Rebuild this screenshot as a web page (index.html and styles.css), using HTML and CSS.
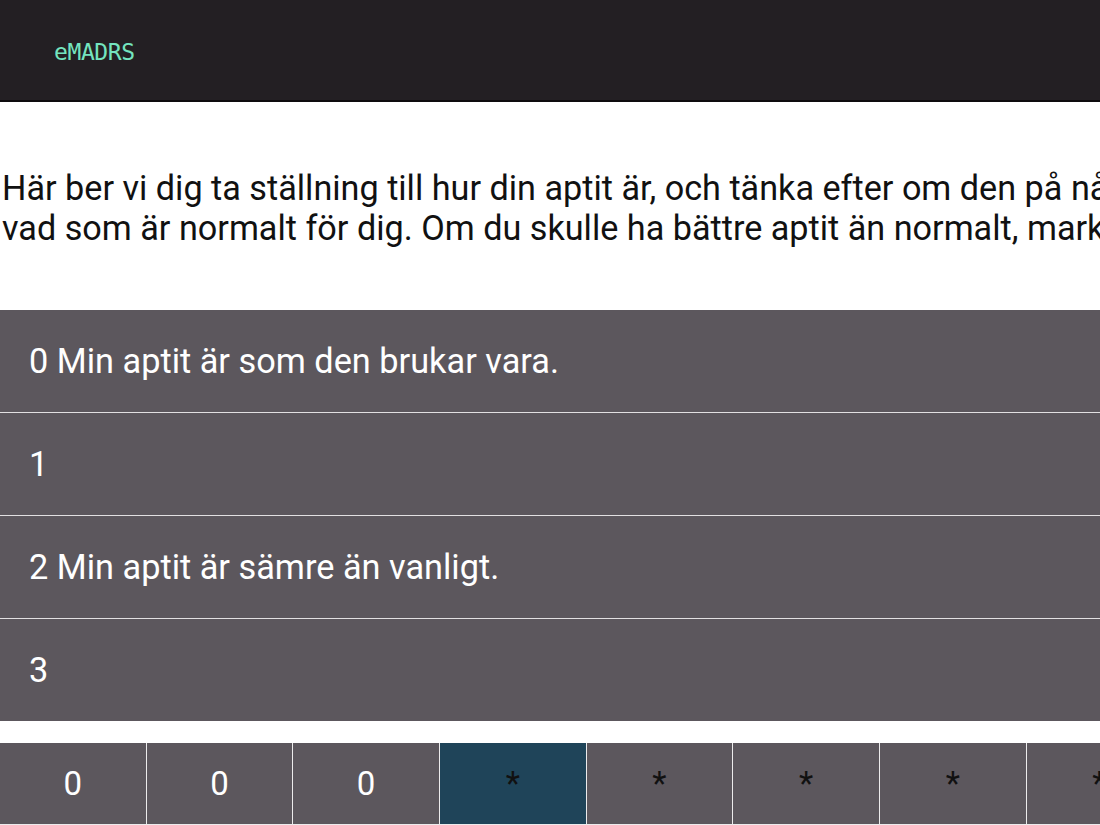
FILE: index.html
```html
<!DOCTYPE html>
<html lang="sv">
<head>
<meta charset="utf-8">
<title>eMADRS</title>
<link rel="stylesheet" href="styles.css">
</head>
<body>
<header class="topbar">
  <div class="logo">eMADRS</div>
</header>
<main class="content">
  <p class="intro">Här ber vi dig ta ställning till hur din aptit är, och tänka efter om den på något sätt skiljer sig från<br>vad som är normalt för dig. Om du skulle ha bättre aptit än normalt, markera 0.</p>
  <ul class="options">
    <li class="option">0 Min aptit är som den brukar vara.</li>
    <li class="option">1</li>
    <li class="option">2 Min aptit är sämre än vanligt.</li>
    <li class="option">3</li>
  </ul>
  <nav class="steps">
    <div class="step done">0</div>
    <div class="step done">0</div>
    <div class="step done">0</div>
    <div class="step current">*</div>
    <div class="step">*</div>
    <div class="step">*</div>
    <div class="step">*</div>
    <div class="step">*</div>
    <div class="step">*</div>
  </nav>
</main>
</body>
</html>
```

FILE: styles.css
```css
html, body {
  margin: 0;
  padding: 0;
  overflow: hidden;
  background: #ffffff;
  font-family: Roboto, "Noto Sans", "Liberation Sans", sans-serif;
}

.topbar {
  box-sizing: border-box;
  height: 102px;
  background: #231f23;
  border-bottom: 2px solid #0e0c0e;
  display: flex;
  align-items: center;
  padding: 4px 0 0 54px;
}

.logo {
  font-family: "DejaVu Sans Mono", monospace;
  font-size: 23px;
  color: #74e4bf;
  letter-spacing: -0.4px;
}

.content {
  padding-top: 66px;
}

.intro {
  margin: 0;
  padding-left: 2px;
  font-size: 34.2px;
  line-height: 40px;
  color: #111111;
  white-space: nowrap;
}

.options {
  list-style: none;
  margin: 62px 0 0;
  padding: 0;
}

.option {
  box-sizing: border-box;
  height: 103px;
  display: flex;
  align-items: center;
  padding-left: 29px;
  background: #5c575d;
  color: #ffffff;
  font-size: 34.3px;
  border-bottom: 1px solid #e2e0e2;
  white-space: nowrap;
}

.option:last-child {
  border-bottom: none;
  height: 102px;
}

.steps {
  display: flex;
  margin-top: 22px;
  width: 1320px;
}

.step {
  box-sizing: border-box;
  flex: 0 0 146.67px;
  height: 82px;
  display: flex;
  align-items: center;
  justify-content: center;
  background: #5c575d;
  border-right: 1px solid #ecebec;
  border-bottom: 1px solid #ecebec;
  color: #111111;
  font-size: 33px;
}

.step.done {
  color: #ffffff;
}

.step.current {
  background: #1f4459;
}
```
